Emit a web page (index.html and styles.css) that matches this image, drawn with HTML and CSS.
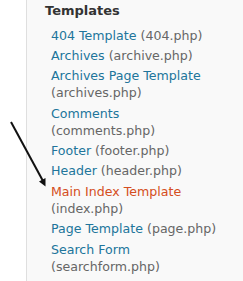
FILE: index.html
```html
<!DOCTYPE html>
<html lang="en">
<head>
    <meta charset="UTF-8">
    <title>Templates</title>
    <link rel="stylesheet" href="styles.css">
</head>
<body>

    <div class="sidebar">
        <h3>Templates</h3>
        <ul class="templates">
            <li><a href="#">404 Template</a> (404.php)</li>
            <li><a href="#">Archives</a> (archive.php)</li>
            <li><a href="#">Archives Page Template</a><br>(archives.php)</li>
            <li><a href="#">Comments</a><br>(comments.php)</li>
            <li><a href="#">Footer</a> (footer.php)</li>
            <li><a href="#">Header</a> (header.php)</li>
            <li class="current"><a href="#">Main Index Template</a><br>(index.php)</li>
            <li><a href="#">Page Template</a> (page.php)</li>
            <li><a href="#">Search Form</a><br>(searchform.php)</li>
        </ul>
    </div>

    <svg class="arrow" width="60" height="200" viewBox="0 0 60 200">
        <line x1="11" y1="122" x2="43" y2="181" stroke="#111" stroke-width="2"/>
        <polygon points="45.5,186.5 39,181.5 45.5,178" fill="#111"/>
    </svg>

</body>
</html>
```

FILE: styles.css
```css
body {
    margin: 0;
    background: #fff;
    font-family: "DejaVu Sans", Verdana, sans-serif;
}

.sidebar {
    margin-left: 26px;
    height: 281px;
    background: #f9f9f9;
    border-left: 1px solid #dfdfdf;
    padding: 3px 0 0 18px;
    overflow: hidden;
}

h3 {
    margin: 0 0 8.5px;
    font-size: 13px;
    color: #333;
}

.templates {
    list-style: none;
    margin: 0;
    padding: 0 0 0 6px;
    font-size: 12.6px;
    line-height: 17.5px;
    color: #666;
}

.templates li {
    margin-bottom: 2.7px;
}

.templates a {
    color: #21759b;
    text-decoration: none;
}

.templates .current a {
    color: #d54e21;
}

.arrow {
    position: absolute;
    left: 0;
    top: 0;
}
```
